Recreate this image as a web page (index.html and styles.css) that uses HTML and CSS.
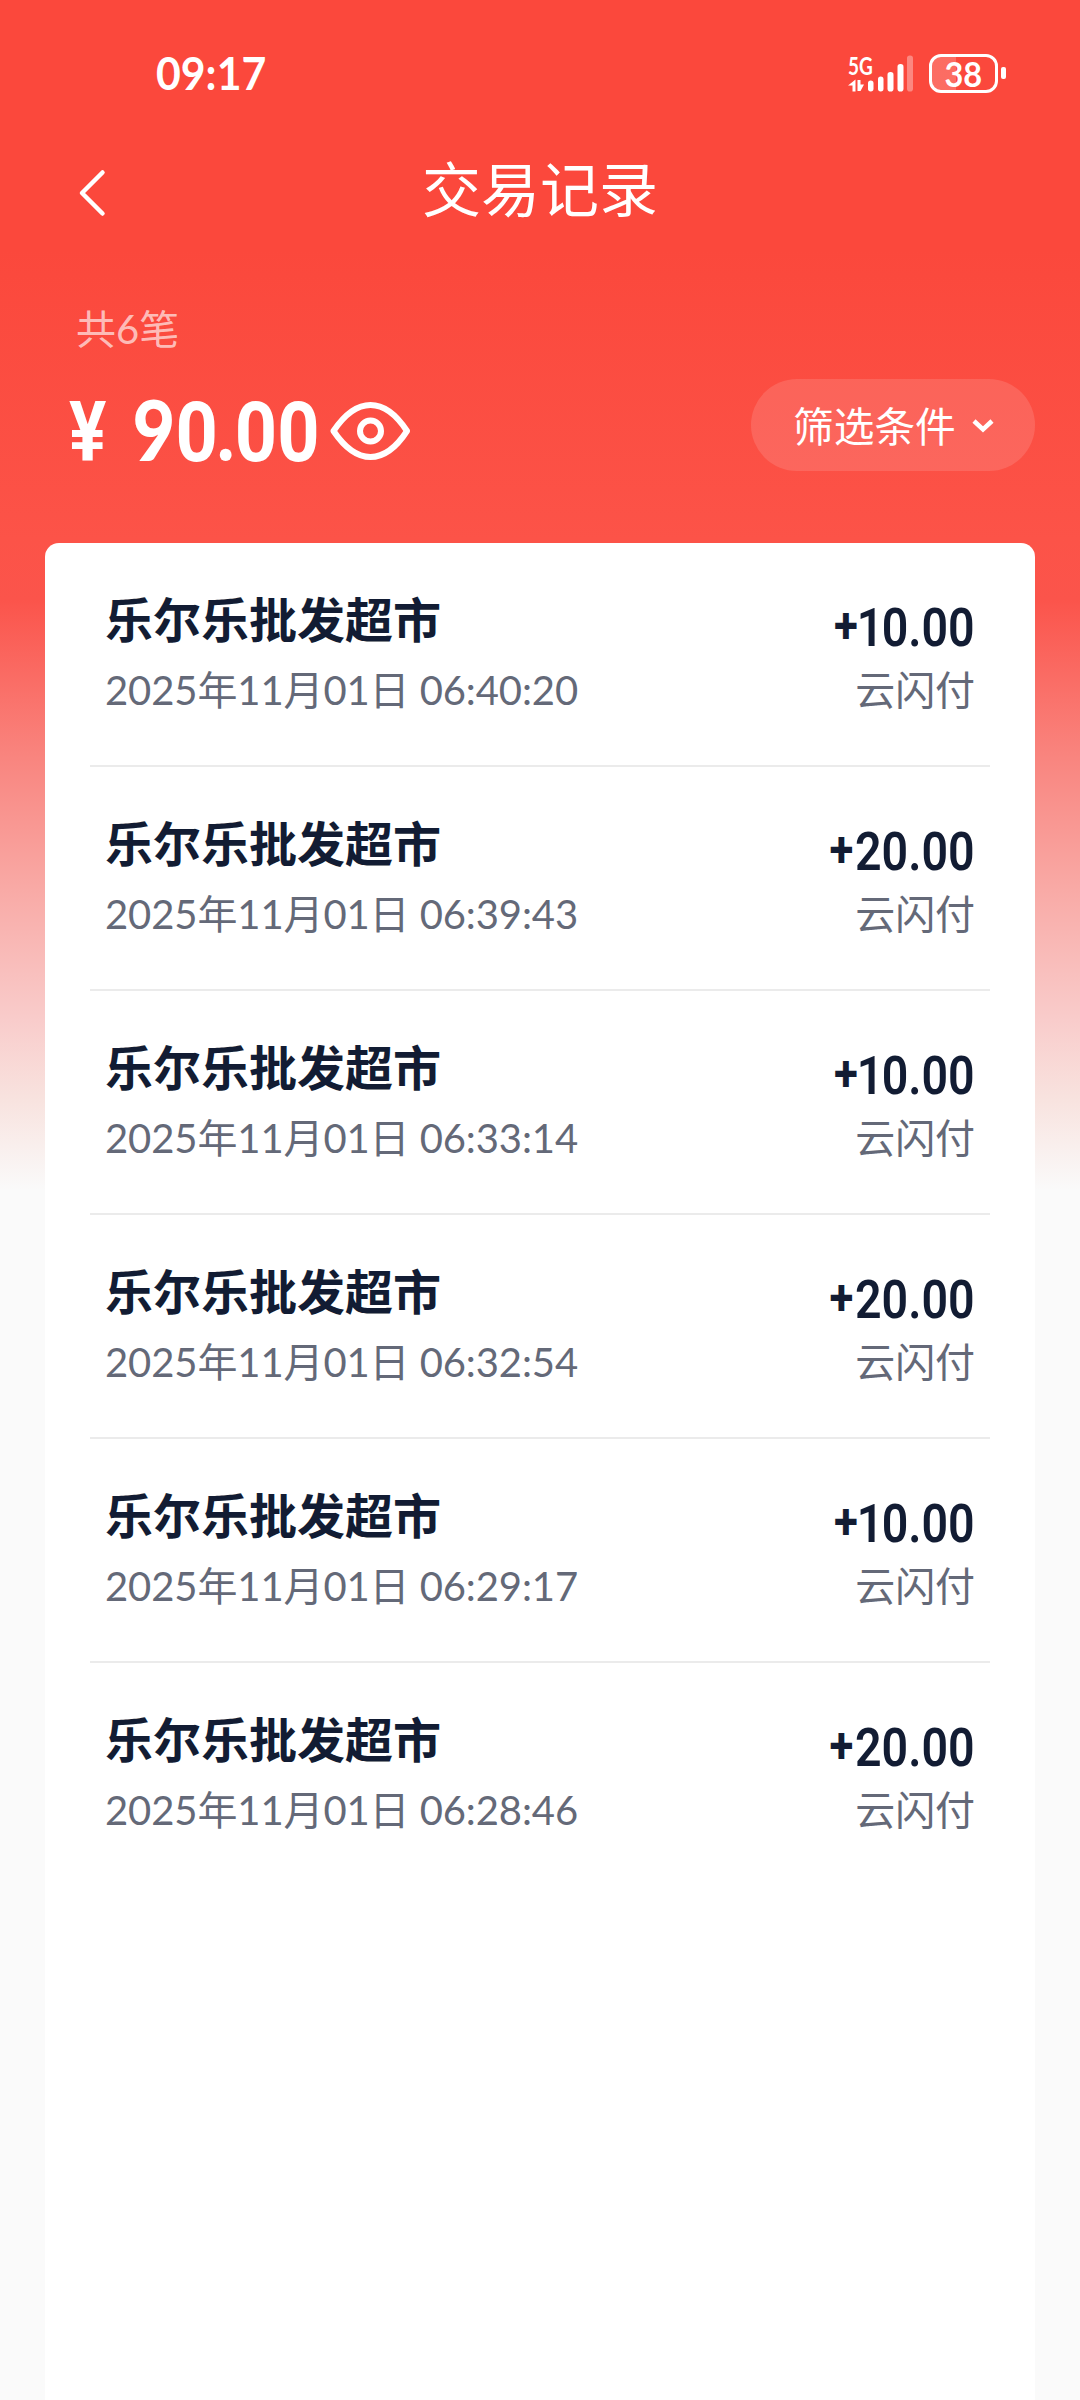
FILE: index.html
```html
<!DOCTYPE html>
<html lang="zh-CN">
<head>
<meta charset="utf-8">
<title>交易记录</title>
<link rel="stylesheet" href="styles.css">
</head>
<body>
<main class="screen">
  <header class="status">
    <span class="clock">09:17</span>
    <div class="indicators">
      <div class="network">
        <span class="net-type">5G</span>
        <svg class="bars" width="66" height="39" viewBox="0 0 66 39" fill="#fff">
          <path d="M4.500 37.500V31.500H0L7.500 25.500V37.500zM9.500 26h3v4.500h3.500L12.500 37H9.500z"/>
          <rect x="20" y="26.500" width="5.500" height="11" rx="2.700"/>
          <rect x="30" y="22.500" width="5.500" height="15" rx="2.700"/>
          <rect x="39.500" y="18" width="6" height="19.500" rx="2.800"/>
          <rect x="49.500" y="10" width="6" height="27.500" rx="2.800"/>
          <rect x="59" y="1.500" width="6" height="36" rx="2.800" opacity=".35"/>
        </svg>
      </div>
      <div class="battery"><span>38</span></div>
      <i class="battery-tip"></i>
    </div>
  </header>
  <nav class="navbar">
    <svg class="back" width="30" height="50" viewBox="0 0 30 50" fill="none" stroke="#fff" stroke-width="4.500" stroke-linecap="round" stroke-linejoin="round"><path d="M24.500 4.500L4 25L24.500 45.500"/></svg>
    <h1>交易记录</h1>
  </nav>
  <section class="summary">
    <p class="count">共6笔</p>
    <div class="total-row">
      <div class="total"><span class="yen">¥</span><span class="sum"><b>9</b>0<i>.</i>00</span></div>
      <svg class="eye" width="82" height="62" viewBox="0 0 82 62" fill="none" stroke="#fff" stroke-width="6"><path d="M3.500 31Q21 5 40.500 5T77 31Q60 57 40.500 57T3.500 31Z" stroke-linejoin="round"/><circle cx="40.500" cy="31" r="10.500"/></svg>
      <button class="filter">筛选条件<svg width="22" height="16" viewBox="0 0 22 16" fill="none" stroke="#fff" stroke-width="4.500"><path d="M2 3L11 11.500L20 3"/></svg></button>
    </div>
  </section>
  <ul class="list">
    <li><div><h2>乐尔乐批发超市</h2><p>2025年11月01日 06:40:20</p></div><div class="right"><strong><b>+</b><i>1</i>0.00</strong><p>云闪付</p></div></li>
    <li><div><h2>乐尔乐批发超市</h2><p>2025年11月01日 06:39:43</p></div><div class="right"><strong><b>+</b>20.00</strong><p>云闪付</p></div></li>
    <li><div><h2>乐尔乐批发超市</h2><p>2025年11月01日 06:33:14</p></div><div class="right"><strong><b>+</b><i>1</i>0.00</strong><p>云闪付</p></div></li>
    <li><div><h2>乐尔乐批发超市</h2><p>2025年11月01日 06:32:54</p></div><div class="right"><strong><b>+</b>20.00</strong><p>云闪付</p></div></li>
    <li><div><h2>乐尔乐批发超市</h2><p>2025年11月01日 06:29:17</p></div><div class="right"><strong><b>+</b><i>1</i>0.00</strong><p>云闪付</p></div></li>
    <li><div><h2>乐尔乐批发超市</h2><p>2025年11月01日 06:28:46</p></div><div class="right"><strong><b>+</b>20.00</strong><p>云闪付</p></div></li>
  </ul>
</main>
</body>
</html>
```
FILE: styles.css
```css
* { box-sizing: border-box; margin: 0; padding: 0; }
body { font-family: Lato, "Noto Sans CJK SC", sans-serif; color: #fff; }
i { font-style: normal; }
.screen {
  width: 1080px;
  height: 2400px;
  overflow: hidden;
  display: flex;
  flex-direction: column;
  background: linear-gradient(#fb483c 0, #fb483c 250px, #fc5348 540px, #fb544b 600px, #f9847e 755px, #f9aaa6 890px, #f9cccb 1020px, #f8e3df 1100px, #fafafa 1190px);
}
.status {
  height: 120px;
  padding: 52px 74px 0 156px;
  display: flex;
  justify-content: space-between;
}
.clock {
  font-size: 46px;
  line-height: 42px;
  font-weight: 700;
  transform: scaleX(.93);
  transform-origin: left;
}
.indicators { display: flex; align-items: center; height: 42px; }
.network { position: relative; width: 66px; height: 39px; margin-right: 15px; }
.net-type {
  position: absolute;
  left: 0;
  top: 0;
  font-size: 25px;
  line-height: 22px;
  font-weight: 700;
  transform: scaleX(.76);
  transform-origin: left;
}
.bars { display: block; }
.battery {
  width: 69px;
  height: 39px;
  border: 3px solid #fff;
  border-radius: 12px;
  display: flex;
  align-items: center;
  justify-content: center;
  background: linear-gradient(90deg, rgba(255,255,255,.2) 38%, transparent 38%);
}
.battery span { font-size: 35px; line-height: 33px; font-weight: 700; transform: scaleX(.93); }
.battery-tip { width: 5px; height: 12px; margin-left: 3px; border-radius: 2px; background: #fff; }
.navbar {
  height: 146px;
  display: grid;
  grid-template-columns: 110px 1fr 110px;
  align-items: start;
  padding-top: 26px;
}
.back { margin: 22px 0 0 78px; }
.navbar h1 { font-size: 59px; line-height: 88px; font-weight: 400; text-align: center; }
.summary { height: 277px; padding: 34px 45px 0 68px; }
.count { font-size: 40px; line-height: 58px; padding-left: 8px; color: rgba(255,255,255,.65); }
.total-row { display: flex; align-items: center; height: 92px; margin-top: 21px; }
.total {
  width: 262px;
  display: flex;
  align-items: baseline;
  font: 700 83px/92px Roboto, sans-serif;
  padding-top: 12px;
}
.yen { width: 65px; font-size: 83px; transform: translateX(1px) scaleX(.84); transform-origin: left; }
.sum { padding-left: 22px; transform: scaleX(.89); transform-origin: left; }
.sum b { font-family: Lato, sans-serif; }
.sum i { margin: 0 -2px 0 -3px; }
.eye { margin-top: 11px; }
.filter {
  margin-left: auto;
  width: 284px;
  height: 92px;
  border: 0;
  border-radius: 46px;
  background: rgba(255,255,255,.13);
  color: #fff;
  font: 400 40.7px/60px "Noto Sans CJK SC", sans-serif;
  display: flex;
  align-items: center;
  padding-left: 42px;
}
.filter svg { margin: 2px 0 0 16px; }
.list {
  flex: 1;
  margin: 0 45px;
  padding: 0 45px;
  list-style: none;
  background: #fff;
  border-radius: 14px 14px 0 0;
}
.list li {
  height: 224px;
  padding: 42px 15px 0;
  display: flex;
  justify-content: space-between;
  border-bottom: 2px solid #ebebeb;
}
.list li:last-child { border-bottom: 0; }
.list h2 { font-size: 48px; line-height: 70px; font-weight: 700; color: #121c33; }
.list p { font-size: 40px; line-height: 70px; color: #646978; letter-spacing: -.1px; white-space: nowrap; }
.right { text-align: right; }
.right strong {
  display: block;
  height: 70px;
  padding-top: 15px;
  font: 600 53.500px/55px Roboto, sans-serif;
  color: #121c33;
  transform: scaleX(.87);
  transform-origin: right;
}
.right b { display: inline-block; font-weight: 700; transform: translate(-1px, -2px) scale(.94); }
.right i { margin: 0 -2px 0 -3px; }
```
